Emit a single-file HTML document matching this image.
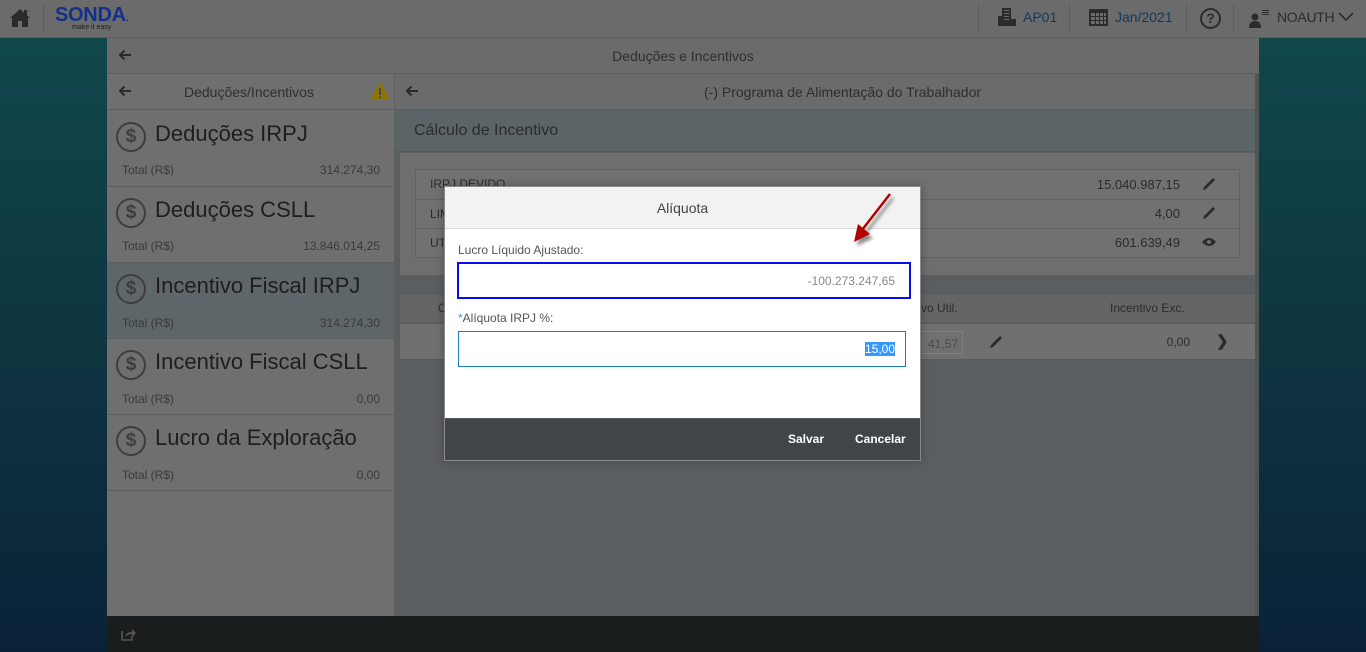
<!DOCTYPE html>
<html><head><meta charset="utf-8"><style>
*{margin:0;padding:0;box-sizing:border-box}
body{width:1366px;height:652px;overflow:hidden;font-family:"Liberation Sans",sans-serif;background:linear-gradient(#114a4d,#0e3440 55%,#0a2238);position:relative}
.a{position:absolute}
.t{color:#2a2a2a}
</style></head><body>
<!-- top bar -->
<div class="a" style="left:0;top:0;width:1366px;height:38px;background:#6b6b6b;border-bottom:1px solid #5e5e5e"></div>
<svg class="a" style="left:9px;top:8px" width="22" height="20" viewBox="0 0 22 20"><path d="M11 1 L1 10 L3 10 L3 19 L9 19 L9 13 L13 13 L13 19 L19 19 L19 10 L21 10 Z" fill="#2b2b2b"/><rect x="15" y="2" width="3" height="5" fill="#2b2b2b"/></svg>
<div class="a" style="left:43px;top:4px;width:1px;height:29px;background:#5d5d5d"></div>
<div class="a" style="left:55px;top:4px;font-size:20px;font-weight:bold;color:#13318a;letter-spacing:-0.3px">SONDA<span style="font-size:10px">.</span></div>
<div class="a" style="left:72px;top:24px;font-size:7px;color:#1a1a1a">make it easy</div>
<div class="a" style="left:978px;top:4px;width:1px;height:29px;background:#5d5d5d"></div>
<svg class="a" style="left:997px;top:7px" width="20" height="20" viewBox="0 0 20 20" fill="#2b2b2b"><rect x="5" y="1" width="9" height="18"/><rect x="1" y="9" width="4" height="10"/><rect x="14" y="12" width="5" height="7"/><g fill="#6b6b6b"><rect x="7" y="3" width="5" height="1"/><rect x="7" y="6" width="5" height="1"/><rect x="7" y="9" width="5" height="1"/><rect x="7" y="12" width="5" height="1"/></g></svg>
<div class="a" style="left:1023px;top:9px;font-size:14px;color:#103a5c">AP01</div>
<div class="a" style="left:1069px;top:4px;width:1px;height:29px;background:#5d5d5d"></div>
<svg class="a" style="left:1088px;top:7px" width="21" height="20" viewBox="0 0 21 20"><rect x="1" y="2" width="19" height="17" fill="#2b2b2b"/><g fill="#6b6b6b"><rect x="3" y="6" width="15" height="11"/></g><g fill="#2b2b2b"><rect x="3" y="9" width="15" height="1"/><rect x="3" y="13" width="15" height="1"/><rect x="7" y="6" width="1" height="11"/><rect x="11" y="6" width="1" height="11"/><rect x="15" y="6" width="1" height="11"/></g></svg>
<div class="a" style="left:1115px;top:9px;font-size:14px;color:#103a5c">Jan/2021</div>
<div class="a" style="left:1186px;top:4px;width:1px;height:29px;background:#5d5d5d"></div>
<div class="a" style="left:1200px;top:8px;width:21px;height:21px;border:2px solid #2b2b2b;border-radius:50%;font-size:14px;font-weight:bold;color:#2b2b2b;text-align:center;line-height:17px">?</div>
<div class="a" style="left:1233px;top:4px;width:1px;height:29px;background:#5d5d5d"></div>
<svg class="a" style="left:1249px;top:9px" width="22" height="20" viewBox="0 0 22 20" fill="#2b2b2b"><circle cx="6" cy="8" r="3.5"/><path d="M0 19 Q0 12 6 12 Q12 12 12 19Z"/><rect x="13" y="1" width="7" height="1"/><rect x="13" y="3" width="7" height="1"/><rect x="13" y="5" width="7" height="1"/></svg>
<div class="a" style="left:1277px;top:9px;font-size:14px;color:#2b2b2b;letter-spacing:-0.3px">NOAUTH</div>
<svg class="a" style="left:1338px;top:12px" width="16" height="10" viewBox="0 0 16 10"><path d="M1 1 L8 8 L15 1" stroke="#2b2b2b" stroke-width="1.6" fill="none"/></svg>

<!-- main -->
<div class="a" style="left:107px;top:38px;width:1152px;height:36px;background:#6b6b6b;border-bottom:1px solid #5e5e5e"></div>
<svg class="a" style="left:118px;top:49px" width="14" height="12" viewBox="0 0 14 12"><path d="M13 6 H2 M6.5 1.5 L2 6 L6.5 10.5" stroke="#2a2a2a" stroke-width="2" fill="none"/></svg>
<div class="a" style="left:0;width:1366px;text-align:center;top:48px;font-size:14px;color:#2e2e2e">Deduções e Incentivos</div>

<!-- left panel -->
<div class="a" style="left:107px;top:74px;width:288px;height:542px;background:#6f6f6f;border-right:1px solid #5e5e5e"></div>
<div class="a" style="left:107px;top:74px;width:288px;height:36px;border-bottom:1px solid #5e5e5e"></div>
<svg class="a" style="left:118px;top:85px" width="14" height="12" viewBox="0 0 14 12"><path d="M13 6 H2 M6.5 1.5 L2 6 L6.5 10.5" stroke="#2a2a2a" stroke-width="2" fill="none"/></svg>
<div class="a" style="left:184px;top:84px;font-size:14px;color:#2e2e2e">Deduções/Incentivos</div>
<svg class="a" style="left:369px;top:81px" width="22" height="20" viewBox="0 0 22 20"><path d="M11 1 L21 19 L1 19Z" fill="#8a7500"/><rect x="10" y="7" width="2" height="7" fill="#4a4a4a"/><rect x="10" y="15.5" width="2" height="2" fill="#4a4a4a"/></svg>

<div class="a" style="left:107px;top:262px;width:287px;height:76px;background:#5e6669"></div>
<div class="a" style="left:107px;top:186px;width:287px;height:1px;background:#5e5e5e"></div>
<div class="a" style="left:107px;top:262px;width:287px;height:1px;background:#5e5e5e"></div>
<div class="a" style="left:107px;top:338px;width:287px;height:1px;background:#5e5e5e"></div>
<div class="a" style="left:107px;top:414px;width:287px;height:1px;background:#5e5e5e"></div>
<div class="a" style="left:107px;top:490px;width:287px;height:1px;background:#5e5e5e"></div>

<div class="a" style="left:116px;top:122px;width:30px;height:30px;border:2px solid #3e3e3e;border-radius:50%;text-align:center;font-size:19px;line-height:26px;color:#3e3e3e;font-weight:bold">$</div>
<div class="a" style="left:155px;top:121px;font-size:22px;color:#1e1e1e">Deduções IRPJ</div>
<div class="a" style="left:122px;top:163px;font-size:12px;color:#3a3a3a">Total (R$)</div>
<div class="a" style="left:250px;width:130px;text-align:right;top:163px;font-size:12px;color:#3a3a3a">314.274,30</div>

<div class="a" style="left:116px;top:198px;width:30px;height:30px;border:2px solid #3e3e3e;border-radius:50%;text-align:center;font-size:19px;line-height:26px;color:#3e3e3e;font-weight:bold">$</div>
<div class="a" style="left:155px;top:197px;font-size:22px;color:#1e1e1e">Deduções CSLL</div>
<div class="a" style="left:122px;top:239px;font-size:12px;color:#3a3a3a">Total (R$)</div>
<div class="a" style="left:250px;width:130px;text-align:right;top:239px;font-size:12px;color:#3a3a3a">13.846.014,25</div>

<div class="a" style="left:116px;top:274px;width:30px;height:30px;border:2px solid #3e3e3e;border-radius:50%;text-align:center;font-size:19px;line-height:26px;color:#3e3e3e;font-weight:bold">$</div>
<div class="a" style="left:155px;top:273px;font-size:22px;color:#1e1e1e">Incentivo Fiscal IRPJ</div>
<div class="a" style="left:122px;top:316px;font-size:12px;color:#3a3a3a">Total (R$)</div>
<div class="a" style="left:250px;width:130px;text-align:right;top:316px;font-size:12px;color:#3a3a3a">314.274,30</div>

<div class="a" style="left:116px;top:350px;width:30px;height:30px;border:2px solid #3e3e3e;border-radius:50%;text-align:center;font-size:19px;line-height:26px;color:#3e3e3e;font-weight:bold">$</div>
<div class="a" style="left:155px;top:349px;font-size:22px;color:#1e1e1e">Incentivo Fiscal CSLL</div>
<div class="a" style="left:122px;top:392px;font-size:12px;color:#3a3a3a">Total (R$)</div>
<div class="a" style="left:250px;width:130px;text-align:right;top:392px;font-size:12px;color:#3a3a3a">0,00</div>

<div class="a" style="left:116px;top:426px;width:30px;height:30px;border:2px solid #3e3e3e;border-radius:50%;text-align:center;font-size:19px;line-height:26px;color:#3e3e3e;font-weight:bold">$</div>
<div class="a" style="left:155px;top:425px;font-size:22px;color:#1e1e1e">Lucro da Exploração</div>
<div class="a" style="left:122px;top:468px;font-size:12px;color:#3a3a3a">Total (R$)</div>
<div class="a" style="left:250px;width:130px;text-align:right;top:468px;font-size:12px;color:#3a3a3a">0,00</div>

<!-- right panel -->
<div class="a" style="left:395px;top:74px;width:864px;height:542px;background:#5a5e60;border-right:4px solid #515556"></div>
<div class="a" style="left:395px;top:74px;width:860px;height:36px;background:#6b6b6b;border-bottom:1px solid #5e5e5e"></div>
<svg class="a" style="left:405px;top:85px" width="14" height="12" viewBox="0 0 14 12"><path d="M13 6 H2 M6.5 1.5 L2 6 L6.5 10.5" stroke="#2a2a2a" stroke-width="2" fill="none"/></svg>
<div class="a" style="left:704px;top:84px;font-size:14px;color:#2e2e2e">(-) Programa de Alimentação do Trabalhador</div>
<div class="a" style="left:395px;top:110px;width:860px;height:42px;background:#5b6466;border-bottom:1px solid #535b5d"></div>
<div class="a" style="left:414px;top:122px;font-size:16px;color:#2b2b2b">Cálculo de Incentivo</div>
<div class="a" style="left:400px;top:153px;width:855px;height:122px;background:#6e6e6e"></div>
<div class="a" style="left:415px;top:169px;width:825px;height:89px;background:#717171;border:1px solid #626262"></div>
<div class="a" style="left:415px;top:199px;width:825px;height:1px;background:#626262"></div>
<div class="a" style="left:415px;top:228px;width:825px;height:1px;background:#626262"></div>
<div class="a" style="left:430px;top:177px;font-size:12px;color:#2b2b2b">IRPJ DEVIDO</div>
<div class="a" style="left:430px;top:207px;font-size:12px;color:#2b2b2b">LIM</div>
<div class="a" style="left:430px;top:236px;font-size:12px;color:#2b2b2b">UT</div>
<div class="a" style="left:1030px;width:150px;text-align:right;top:177px;font-size:13px;color:#2b2b2b">15.040.987,15</div>
<div class="a" style="left:1030px;width:150px;text-align:right;top:206px;font-size:13px;color:#2b2b2b">4,00</div>
<div class="a" style="left:1030px;width:150px;text-align:right;top:235px;font-size:13px;color:#2b2b2b">601.639,49</div>
<svg class="a" style="left:1201px;top:176px" width="16" height="16" viewBox="0 0 16 16"><path d="M2 14 L3 11 L12 2 L14 4 L5 13Z" fill="#2b2b2b"/></svg>
<svg class="a" style="left:1201px;top:205px" width="16" height="16" viewBox="0 0 16 16"><path d="M2 14 L3 11 L12 2 L14 4 L5 13Z" fill="#2b2b2b"/></svg>
<svg class="a" style="left:1201px;top:236px" width="16" height="12" viewBox="0 0 16 12"><path d="M1 6 Q8 -2 15 6 Q8 14 1 6Z" fill="#2b2b2b"/><circle cx="8" cy="6" r="2" fill="#717171"/></svg>

<div class="a" style="left:400px;top:295px;width:855px;height:28px;background:#656565;border-bottom:1px solid #5a5a5a"></div>
<div class="a" style="left:400px;top:324px;width:855px;height:36px;background:#707070;border-bottom:1px solid #5a5a5a"></div>
<div class="a" style="left:438px;top:301px;font-size:12px;color:#2b2b2b">C</div>
<div class="a" style="left:921px;top:301px;font-size:12px;color:#2b2b2b">vo Util.</div>
<div class="a" style="left:1110px;top:301px;font-size:12px;color:#2b2b2b">Incentivo Exc.</div>
<div class="a" style="left:915px;top:331px;width:48px;height:23px;border:1px solid #808080;font-size:12px;color:#4a4a4a;padding:5px 0 0 12px">41,57</div>
<svg class="a" style="left:988px;top:334px" width="16" height="16" viewBox="0 0 16 16"><path d="M2 14 L3 11 L12 2 L14 4 L5 13Z" fill="#2b2b2b"/></svg>
<div class="a" style="left:1080px;width:110px;text-align:right;top:335px;font-size:12px;color:#2b2b2b">0,00</div>
<div class="a" style="left:1216px;top:332px;font-size:15px;color:#2b2b2b;font-weight:bold">&#10095;</div>

<!-- bottom bar -->
<div class="a" style="left:107px;top:616px;width:1152px;height:36px;background:#1a1d1e"></div>
<svg class="a" style="left:121px;top:627px" width="16" height="14" viewBox="0 0 16 14"><path d="M1 4 L1 13 L11 13 L11 9" stroke="#555" stroke-width="1.6" fill="none"/><path d="M4 10 Q5 5 11 5 L11 2 L15 6 L11 10 L11 7 Q7 7 4 10Z" fill="#555"/></svg>

<!-- modal -->
<div class="a" style="left:444px;top:186px;width:477px;height:275px;background:#fff;border:1px solid #8a8a8a;box-shadow:0 0 8px rgba(0,0,0,.3)"></div>
<div class="a" style="left:445px;top:187px;width:475px;height:42px;background:#f2f2f2;border-bottom:1px solid #dcdcdc;text-align:center;font-size:14px;line-height:42px;color:#444">Alíquota</div>
<div class="a" style="left:458px;top:243px;font-size:12px;color:#555">Lucro Líquido Ajustado:</div>
<div class="a" style="left:457px;top:262px;width:454px;height:37px;border:2px solid #0a0aeb;font-size:12px;color:#888;text-align:right;padding:10px 14px 0 0">-100.273.247,65</div>
<div class="a" style="left:458px;top:311px;font-size:12px;color:#555"><span style="color:#3a9ad9">*</span>Alíquota IRPJ %:</div>
<div class="a" style="left:458px;top:331px;width:448px;height:36px;border:1px solid #1a7ec0;text-align:right;padding:10px 10px 0 0;font-size:12px"><span style="background:#3399ff;color:#fff">15,00</span></div>
<div class="a" style="left:445px;top:418px;width:475px;height:42px;background:#3f4548;border-top:1px solid #555"></div>
<div class="a" style="left:788px;top:432px;font-size:12px;color:#fff;font-weight:bold">Salvar</div>
<div class="a" style="left:855px;top:432px;font-size:12px;color:#fff;font-weight:bold">Cancelar</div>

<!-- arrow -->
<svg class="a" style="left:846px;top:188px" width="56" height="64" viewBox="0 0 56 64"><defs><filter id="s" x="-50%" y="-50%" width="200%" height="200%"><feGaussianBlur stdDeviation="1.5"/></filter></defs><g transform="translate(3,4)" opacity=".45" filter="url(#s)"><path d="M44 6 L16 42" stroke="#000" stroke-width="2.5"/><path d="M8 54 L12 36 L24 46Z" fill="#000"/></g><path d="M44 6 L16 42" stroke="#b50000" stroke-width="2.5"/><path d="M8 54 L12 36 L24 46Z" fill="#b50000"/></svg>
</body></html>
